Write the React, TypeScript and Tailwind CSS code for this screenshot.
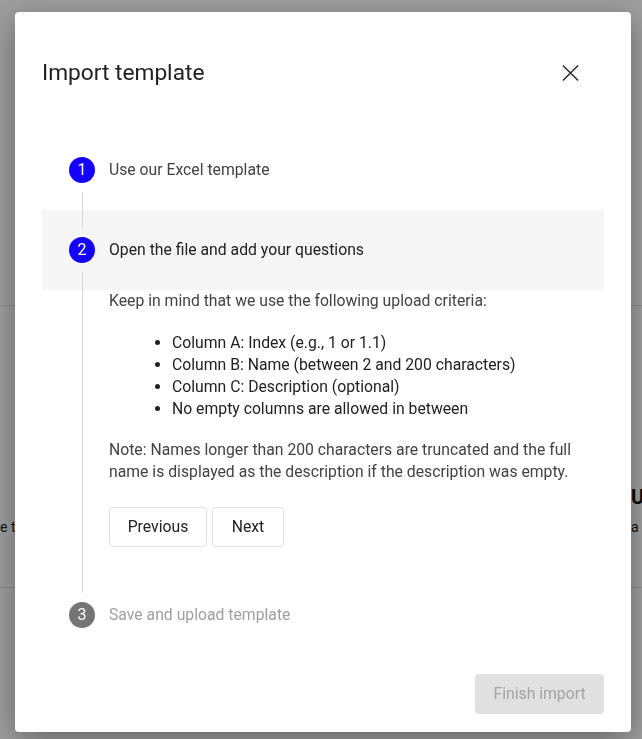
import React from "react";

function Circle({ n, active }: { n: number; active: boolean }) {
  return (
    <div
      className={
        "w-[26px] h-[26px] rounded-full flex items-center justify-center text-white text-[16px] leading-none shrink-0 " +
        (active ? "bg-[#1400ff]" : "bg-[#757575]")
      }
    >
      {n}
    </div>
  );
}

function StepHeader({
  n,
  label,
  top,
  bottom,
  active,
  current,
  textClass,
}: {
  n: number;
  label: string;
  top: boolean;
  bottom: boolean;
  active: boolean;
  current: boolean;
  textClass: string;
}) {
  return (
    <div className={"flex h-[80px] pl-[27px] " + (current ? "bg-[#f5f5f5]" : "")}>
      <div className="flex flex-col items-center w-[26px] shrink-0">
        <div className={"flex-1 w-px mb-[9px] " + (top ? "bg-[#d6d6d6]" : "")} />
        <Circle n={n} active={active} />
        <div className={"flex-1 w-px mt-[9px] " + (bottom ? "bg-[#d6d6d6]" : "")} />
      </div>
      <div className={"flex items-center ml-[14px] text-[15.75px] " + textClass}>{label}</div>
    </div>
  );
}

export default function App() {
  return (
    <div
      className="relative w-[642px] h-[739px] overflow-hidden bg-white"
      style={{ fontFamily: "Roboto, 'Noto Sans', sans-serif" }}
    >
      {/* background page */}
      <div className="h-[305px]" />
      <div className="h-[283px] border-t border-b border-[#e0e0e0] flex justify-between">
        <div className="mt-[211px] text-[14px] leading-[20px] text-[#222] whitespace-nowrap">e the</div>
        <div className="w-[11px] whitespace-nowrap">
          <div className="mt-[179px] text-[20px] leading-[24px] font-bold text-[#111]">U</div>
          <div className="mt-[8px] text-[14px] leading-[20px] text-[#222]">a l</div>
        </div>
      </div>

      {/* overlay */}
      <div className="fixed inset-0 bg-[rgba(0,0,0,0.38)]" />

      {/* modal */}
      <div className="absolute left-[15px] top-[12px] w-[616px] h-[720px] bg-white rounded-[4px] shadow-[0_8px_30px_rgba(0,0,0,0.35)] px-[27px] pt-[40px] pb-[18px] flex flex-col">
        <div className="flex items-center justify-between h-[42px]">
          <h1 className="text-[22.7px] leading-none text-[#212121] font-normal">Import template</h1>
          <button className="mr-[25px] w-[17px] h-[17px] flex items-center justify-center">
            <svg width="18" height="18" viewBox="0 0 18 18" fill="none" stroke="#2b2b2b" strokeWidth="1.6">
              <path d="M1 1 L17 17 M17 1 L1 17" />
            </svg>
          </button>
        </div>

        <div className="mt-[36px] flex flex-col">
          <StepHeader n={1} label="Use our Excel template" top={false} bottom={true} active={true} current={false} textClass="text-[#424242]" />
          <StepHeader n={2} label="Open the file and add your questions" top={true} bottom={true} active={true} current={true} textClass="text-[#212121]" />
          <div className="flex pl-[27px]">
            <div className="w-[26px] shrink-0 flex justify-center">
              <div className="w-px bg-[#d6d6d6]" />
            </div>
            <div className="ml-[14px] pb-[28px] text-[15.75px] leading-[22px] text-[#424242]">
              <p>Keep in mind that we use the following upload criteria:</p>
              <ul className="mt-[20px] list-disc pl-[63px] text-[#212121]">
                <li>Column A: Index (e.g., 1 or 1.1)</li>
                <li>Column B: Name (between 2 and 200 characters)</li>
                <li>Column C: Description (optional)</li>
                <li>No empty columns are allowed in between</li>
              </ul>
              <p className="mt-[19px]">
                Note: Names longer than 200 characters are truncated and the full name is displayed as the description if the description was empty.
              </p>
              <div className="mt-[24px] flex gap-[5px]">
                <button className="h-[40px] w-[98px] border border-[#e0e0e0] rounded-[4px] text-[15.75px] text-[#212121] bg-white">
                  Previous
                </button>
                <button className="h-[40px] w-[72px] border border-[#e0e0e0] rounded-[4px] text-[15.75px] text-[#212121] bg-white">
                  Next
                </button>
              </div>
            </div>
          </div>
          <StepHeader n={3} label="Save and upload template" top={true} bottom={false} active={false} current={false} textClass="text-[#9e9e9e]" />
        </div>

        <div className="mt-auto flex justify-end">
          <button className="h-[40px] w-[129px] rounded-[4px] bg-[#e0e0e0] text-[15.75px] text-[#a3a3a3]">Finish import</button>
        </div>
      </div>
    </div>
  );
}
